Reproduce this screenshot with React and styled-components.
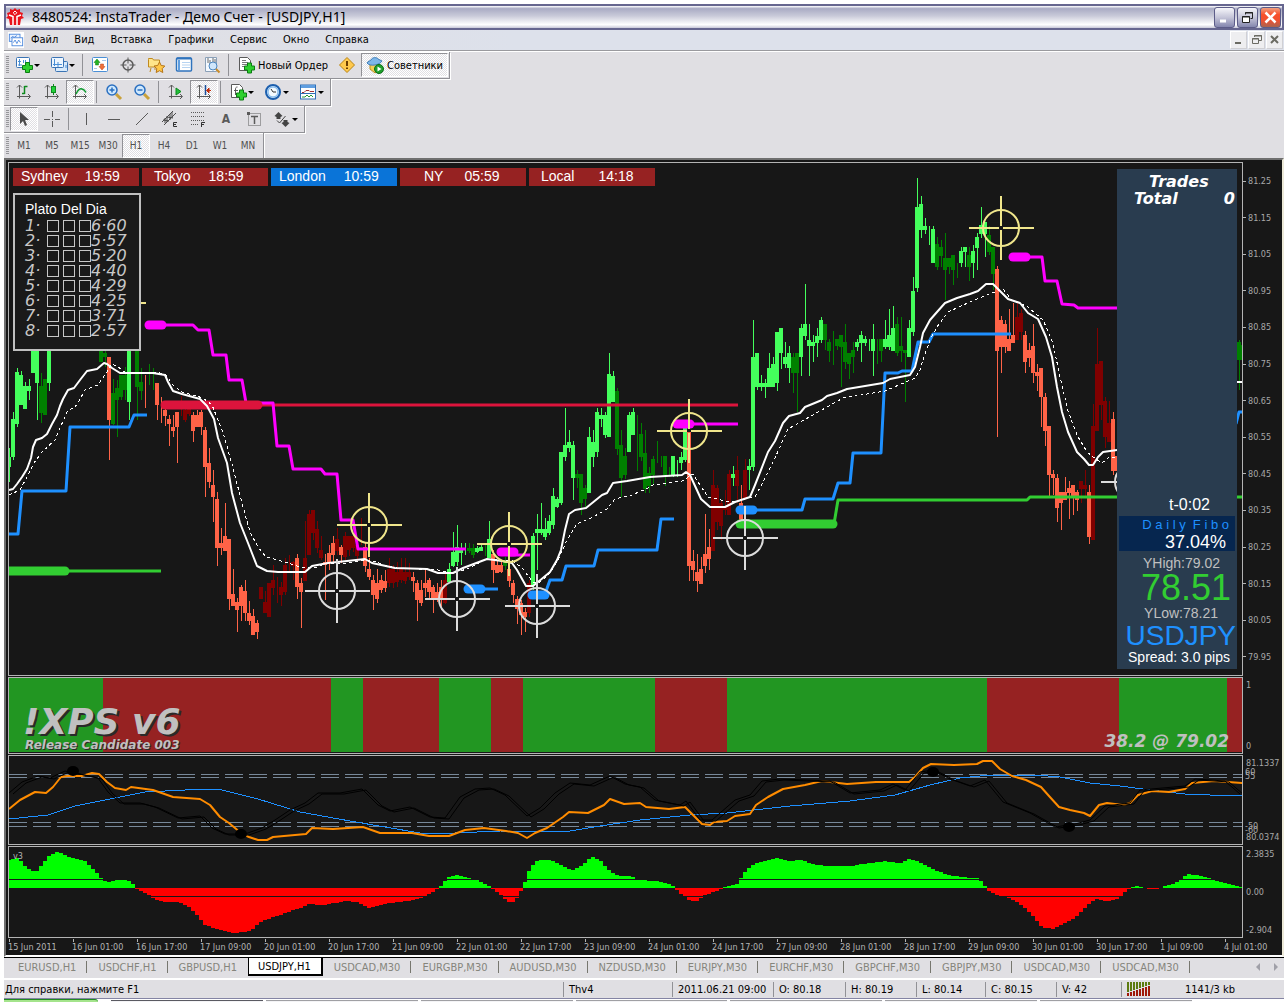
import React from 'react'
import styled, { createGlobalStyle, css } from 'styled-components'

const ui = '"DejaVu Sans Condensed", "DejaVu Sans", sans-serif'
const arial = '"Liberation Sans", Arial, sans-serif'

const GlobalStyle = createGlobalStyle`
* {
  box-sizing: border-box;
}

body {
  margin: 0;
  background: #fff;
  font-family: ${ui};
  font-size: 11px;
}
`

// ---------- chart data ----------

// x, high, low, body top, body bottom, kind
// U = strong up, u = weak up, D = strong down, d = weak down
const CANDLES = `
9 448 482 457 467 U;13 412 460 419 457 U;17 368 427 372 424 U;21 371 405 375 405 U;25 382 409 386 409 U;29 379 400 386 391 U;
33 340 373 340 373 U;37 340 420 340 383 U;41 373 423 386 413 u;45 379 415 379 415 u;49 340 391 340 383 U;
101 345 362 345 362 u;105 350 367 353 357 u;109 357 460 357 420 D;113 379 425 393 424 u;117 380 437 388 400 u;121 375 400 375 397 u;
125 367 400 375 390 u;129 340 420 340 402 U;137 340 420 350 387 u;141 368 400 382 391 u;145 375 408 0 0 D;149 364 385 0 0 u;
153 368 390 0 0 u;157 383 420 383 405 D;161 397 423 0 0 D;165 408 426 410 416 D;169 415 446 419 424 D;173 415 437 427 431 D;
177 412 463 412 427 D;181 396 416 0 0 d;185 405 422 410 420 d;189 405 416 409 414 d;193 412 442 415 431 D;197 410 427 415 427 D;
201 410 435 412 427 D;205 427 497 430 467 D;209 448 488 463 482 D;213 470 522 485 497 D;217 492 566 499 548 D;221 528 555 543 548 D;
225 503 551 536 551 D;229 539 610 539 599 D;233 569 606 594 606 D;237 598 632 602 610 D;241 585 621 587 606 D;245 580 621 591 613 D;
249 601 625 613 621 D;253 609 635 616 635 D;257 620 639 623 632 D;261 587 599 587 599 d;265 591 613 602 613 d;269 583 617 583 617 d;
273 565 595 580 588 d;277 577 603 0 0 d;281 582 606 587 595 d;285 558 595 565 592 d;289 555 573 0 0 d;293 561 580 562 566 d;
297 554 599 558 587 D;301 578 628 583 592 D;305 521 581 558 581 d;309 510 555 514 555 d;313 510 540 510 533 d;317 521 553 529 548 d;
321 536 560 550 558 d;325 554 600 562 565 D;329 545 570 553 563 D;333 536 562 543 555 D;337 528 555 539 551 d;341 545 563 547 555 D;
345 532 560 536 557 d;349 536 556 536 550 d;353 536 552 536 548 d;357 540 562 545 556 d;361 518 545 0 0 d;365 543 572 547 566 D;
369 558 580 569 577 D;373 575 610 580 595 D;377 569 603 583 599 D;381 575 593 580 590 D;385 570 592 581 588 D;389 558 587 569 583 d;
393 565 588 569 583 d;397 562 587 572 582 d;401 558 583 568 580 d;405 558 584 572 581 d;409 563 580 572 577 d;413 572 592 577 581 D;
417 580 621 583 600 D;421 580 606 590 603 D;425 570 597 583 588 D;429 578 598 580 592 D;433 585 613 587 599 D;437 583 602 592 599 D;
441 580 610 587 600 D;445 573 604 580 603 d;449 563 582 569 582 U;453 532 567 552 566 U;457 525 566 547 562 U;461 543 565 550 553 U;
465 543 555 0 0 U;469 543 553 548 551 u;473 544 558 548 555 u;477 546 553 548 552 U;481 543 551 547 551 U;485 545 556 0 0 u;
489 521 558 539 558 U;493 550 583 554 570 D;497 560 573 565 573 D;501 562 573 565 572 D;505 557 570 562 566 u;509 560 587 569 581 D;
513 580 603 583 595 D;517 596 624 599 609 D;521 600 635 603 615 D;525 608 632 612 617 D;529 580 617 583 613 d;533 533 590 536 585 U;
537 514 570 529 533 U;541 503 535 529 533 U;545 518 540 529 537 U;549 515 535 521 533 U;553 488 529 496 525 U;557 497 508 499 507 U;
561 452 505 452 503 U;565 408 461 445 457 U;569 430 452 442 448 U;573 441 500 445 478 U;577 470 488 474 478 u;581 474 515 474 503 u;
585 485 507 488 499 u;589 427 493 437 493 U;593 430 467 442 457 U;597 408 457 412 452 U;601 408 427 415 419 U;605 412 438 415 435 U;
609 353 437 374 437 U;613 371 402 376 402 U;617 388 455 391 449 u;621 430 497 445 478 u;625 448 479 456 475 u;629 412 452 415 452 U;
633 408 435 412 435 U;637 415 471 0 0 u;641 423 461 434 457 u;645 430 493 453 489 u;649 467 493 473 486 u;653 456 485 459 475 u;
657 441 463 0 0 u;661 456 467 0 0 u;665 456 486 456 475 u;669 467 477 0 0 u;673 456 477 456 475 U;677 460 477 0 0 U;
681 452 470 457 463 U;685 425 462 428 460 U;689 432 581 432 566 D;693 550 581 561 570 D;697 554 592 572 581 D;701 557 584 569 584 D;
705 514 573 554 566 D;709 529 570 547 559 D;713 470 551 485 551 d;717 485 530 488 522 d;721 500 540 503 526 d;725 490 515 506 510 d;
729 470 515 474 515 d;733 466 486 474 478 U;737 456 503 470 486 d;741 485 522 503 522 D;745 459 500 470 498 d;749 459 490 466 470 U;
753 320 471 357 467 U;757 353 390 353 387 U;761 375 391 383 387 U;765 379 398 383 387 U;769 353 387 368 387 U;773 357 387 364 387 U;
777 332 391 332 383 U;781 328 369 328 353 U;785 342 368 357 364 U;789 346 383 353 368 U;793 353 393 357 373 u;797 353 412 353 373 u;
801 324 376 328 357 U;805 284 340 324 336 U;809 324 376 340 346 U;813 335 362 342 346 U;817 328 357 336 343 U;821 317 343 320 340 U;
825 324 350 324 340 u;829 339 362 342 351 u;833 331 365 0 0 u;837 339 350 339 346 u;841 335 387 335 347 u;845 324 369 342 362 u;
849 353 379 353 364 u;853 342 373 350 357 u;857 339 351 342 347 U;861 331 362 335 343 U;865 336 346 339 343 U;869 339 351 0 0 U;
873 324 376 339 351 U;877 339 364 0 0 u;881 339 362 339 351 u;885 320 349 339 347 U;889 309 350 335 347 U;893 306 351 328 351 U;
897 317 356 324 353 u;901 317 362 346 351 u;905 350 402 350 353 u;909 320 357 328 357 U;913 277 336 291 332 U;917 178 292 207 288 U;
921 196 238 204 230 U;925 218 234 226 230 U;929 226 245 0 0 U;933 226 263 229 263 U;937 237 270 244 267 u;941 240 267 247 256 u;
945 233 300 258 270 u;949 258 274 258 267 u;953 255 285 255 270 u;957 263 278 0 0 u;961 247 267 251 263 U;965 247 267 247 252 U;
969 247 281 255 267 u;973 245 278 251 263 U;977 233 270 237 248 U;981 207 238 225 234 U;985 222 257 222 234 U;989 226 255 235 252 u;
993 247 290 247 274 u;997 266 437 269 351 D;1001 316 373 320 347 D;1005 320 353 324 347 D;1009 309 351 339 351 D;1013 303 343 335 343 D;
1017 303 340 317 340 d;1021 309 340 313 332 d;1025 331 373 335 362 D;1029 343 367 350 358 D;1033 324 383 346 373 D;1037 364 391 372 376 D;
1041 368 427 368 397 D;1045 393 446 397 431 D;1049 426 498 426 475 D;1053 470 495 474 478 D;1057 474 522 478 508 D;1061 492 530 492 503 D;
1065 477 500 492 500 D;1069 481 519 488 493 D;1073 485 515 485 496 D;1077 490 511 492 500 D;1081 481 503 481 489 d;1085 470 497 485 489 d;
1093 404 540 426 540 d;1089 485 544 492 537 D;1097 328 431 364 431 d;1101 361 420 361 405 d;1105 397 448 401 437 d;1109 401 442 423 442 d;
1113 412 475 419 471 D;1117 441 471 456 471 D;1239 340 390 342 360 u;1242 339 369 345 360 u`
  .split(';')
  .map(row => {
    const [x, high, low, top, bottom, kind] = row.trim().split(' ')
    return { x: +x, high: +high, low: +low, top: +top, bottom: +bottom, kind }
  })

const CANDLE_COLORS = { U: '#44ff5c', u: '#008000', D: '#ff6347', d: '#800000' }

const FAST_MA = '9,490 13,489 17,484 22,477 27,469 31,458 33,447 36,440 42,438 47,434 52,424 57,415 60,406 63,399 68,390 74,388 80,380 87,371 97,369 104,363 107,364 112,368 120,373 153,373 165,375 168,382 173,391 182,394 200,399 207,406 214,419 218,438 227,463 232,493 240,523 248,543 257,566 267,571 278,572 305,572 312,566 328,563 347,561 365,559 372,563 395,568 427,569 438,573 453,573 463,568 487,559 502,561 512,563 517,570 526,586 533,586 538,582 550,572 557,560 561,550 565,530 569,514 575,510 586,508 602,495 607,493 613,483 627,481 650,477 682,475 686,472 690,475 701,499 710,507 725,507 735,502 750,497 755,485 768,452 775,441 783,423 789,416 800,413 805,407 822,400 827,396 837,393 847,389 883,383 890,379 910,375 915,367 920,347 923,333 930,320 937,312 945,303 957,298 970,294 978,291 986,284 993,284 1002,293 1008,299 1020,303 1028,313 1038,319 1046,337 1052,357 1057,387 1062,412 1068,432 1077,452 1084,459 1089,465 1093,465 1098,457 1103,452 1117,450'
const SLOW_MA = '9,495 20,490 28,475 34,463 42,452 55,440 60,428 67,412 77,405 85,390 98,385 107,372 112,364 118,367 125,372 160,373 166,375 173,385 182,392 203,398 212,405 218,420 223,432 233,468 242,503 250,532 258,547 266,557 285,562 300,567 315,568 328,563 347,563 363,560 373,561 387,566 397,568 438,570 453,573 467,569 487,559 513,561 522,568 533,582 540,582 550,573 558,560 567,540 577,524 593,517 607,509 615,499 632,495 648,488 653,485 682,481 693,474 700,485 708,497 730,502 755,497 763,482 775,458 788,429 813,415 843,398 885,391 915,378 920,370 923,360 930,340 937,327 948,312 970,302 982,297 992,293 1003,289 1012,300 1028,307 1043,320 1053,343 1060,377 1068,411 1077,435 1087,452 1093,457 1102,463 1108,458 1117,457'

const LEVELS = [
  { color: '#32cd32', points: '9,571 161,571' },
  { color: '#32cd32', points: '834,524 838,500 1027,500 1030,497 1243,497' },
  { color: '#dc143c', points: '165,405 738,405' },
  { color: '#1e90ff', points: '9,534 18,534 22,491 66,491 70,427 129,427 134,415 147,415' },
  { color: '#1e90ff', points: '475,589 498,589' },
  { color: '#1e90ff', points: '545,594 550,580 562,580 566,566 594,566 598,550 657,550 661,519 674,519' },
  { color: '#1e90ff', points: '750,510 802,510 805,499 833,499 838,483 850,483 853,453 881,453 885,373 898,373 902,371 912,371 918,342 929,342 933,334 1011,334' },
  { color: '#1e90ff', points: '1236,424 1239,412 1243,412' },
  { color: '#ff00ff', points: '160,325 193,325 198,330 209,330 213,355 226,355 229,380 242,380 246,403 273,403 277,446 289,446 293,469 321,469 325,474 337,474 341,520 353,520 358,549 466,549' },
  { color: '#ff00ff', points: '510,555 530,555' },
  { color: '#ff00ff', points: '690,424 738,424' },
  { color: '#ff00ff', points: '1025,257 1042,257 1045,281 1057,281 1062,304 1074,305 1078,308 1118,308' },
]

// thick starts of the levels: x1, x2, y, color
const PILLS = [
  [0, 65, 571, '#32cd32'],
  [740, 833, 524, '#32cd32'],
  [165, 258, 405, '#dc143c'],
  [468, 481, 589, '#1e90ff'],
  [532, 545, 595, '#1e90ff'],
  [740, 753, 510, '#1e90ff'],
  [149, 162, 325, '#ff00ff'],
  [501, 514, 552, '#ff00ff'],
  [677, 690, 424, '#ff00ff'],
  [1013, 1026, 257, '#ff00ff'],
]

const TARGETS = [
  [369, 525, '#f0e68c'],
  [509, 544, '#f0e68c'],
  [689, 431, '#f0e68c'],
  [1001, 228, '#f0e68c'],
  [113, 303, '#f0e68c'],
  [337, 591, '#dcdcdc'],
  [457, 599, '#dcdcdc'],
  [537, 606, '#dcdcdc'],
  [745, 538, '#dcdcdc'],
  [1133, 482, '#dcdcdc'],
]

const BANDS = [9, 103, 331, 363, 439, 491, 523, 655, 727, 987, 1119, 1227, 1243]

const OSC_MAIN = '9,809 20,800 35,792 46,793 53,787 61,777 67,776 82,776 92,773 99,774 107,782 115,788 126,790 131,787 153,790 173,797 200,799 210,805 220,817 229,823 241,833 249,837 258,840 267,840 273,837 306,834 312,828 333,829 363,827 380,833 412,833 429,836 449,836 465,830 484,828 506,831 518,833 527,838 535,833 547,828 563,817 569,812 588,813 604,805 610,799 624,804 640,803 646,807 669,809 685,807 690,812 702,824 710,825 714,822 727,821 735,816 750,814 756,805 768,797 783,789 805,785 822,781 847,784 876,782 909,782 915,777 923,768 931,764 954,765 977,764 983,761 992,761 1000,769 1012,776 1026,780 1041,787 1049,796 1059,807 1070,810 1084,813 1090,816 1099,805 1107,803 1123,805 1130,803 1138,795 1152,791 1169,792 1185,789 1192,783 1214,781 1243,783'
const OSC_SIGNAL = '9,819 48,815 75,806 105,800 145,792 205,789 222,790 258,799 300,812 350,821 420,833 455,833 500,831 540,832 570,831 600,826 640,820 690,815 727,813 790,806 850,801 895,795 930,785 960,778 990,775 1036,775 1060,777 1090,783 1120,786 1150,790 1185,794 1210,795 1243,795'
const OSC_SHADOW = '9,793 22,782 38,776 50,778 65,771 80,774 98,778 108,792 120,803 140,803 155,807 178,818 200,816 212,828 225,834 245,834 262,828 275,820 290,810 305,803 318,793 340,793 362,789 378,805 390,811 410,807 430,817 445,818 460,797 475,789 490,788 505,795 527,816 540,808 555,793 570,783 590,785 610,776 625,784 640,787 655,800 680,805 686,801 700,820 712,820 735,800 750,795 762,781 780,779 830,781 850,793 880,790 893,784 905,790 920,772 933,770 950,779 970,786 985,780 1003,802 1030,813 1055,827 1075,824 1090,820 1105,806 1130,803 1140,790 1185,786 1195,779 1225,781 1240,794'

const HISTOGRAM = [
  [9, 860], [18, 858], [26, 867], [32, 871], [38, 871], [43, 863], [50, 855], [58, 852], [65, 855], [75, 859], [85, 861], [95, 871],
  [101, 878], [107, 882], [115, 880], [128, 880], [133, 884], [136, 888], [145, 893], [155, 899], [165, 902], [180, 902], [190, 907],
  [200, 919], [205, 925], [220, 930], [235, 933], [250, 931], [262, 921], [280, 915], [300, 908], [308, 904], [325, 905], [345, 901],
  [358, 902], [370, 908], [385, 904], [415, 900], [430, 894], [439, 888], [448, 877], [455, 875], [475, 879], [488, 885], [491, 888],
  [500, 894], [508, 902], [515, 902], [520, 893], [523, 888], [530, 868], [538, 860], [550, 860], [560, 864], [572, 870], [582, 866],
  [592, 856], [600, 860], [610, 871], [620, 876], [632, 876], [640, 880], [655, 881], [668, 884], [675, 887], [677, 890], [688, 900],
  [695, 902], [705, 895], [722, 889], [725, 887], [737, 884], [745, 872], [752, 865], [765, 861], [777, 858], [790, 861], [803, 860],
  [812, 864], [825, 866], [850, 866], [870, 863], [885, 861], [900, 863], [910, 859], [920, 862], [930, 868], [945, 874], [960, 877],
  [978, 878], [984, 884], [988, 890], [1000, 896], [1012, 899], [1025, 908], [1035, 918], [1042, 927], [1052, 929], [1062, 925],
  [1075, 918], [1085, 908], [1095, 899], [1108, 901], [1120, 898], [1127, 890], [1131, 888], [1137, 886], [1142, 887], [1150, 889],
  [1160, 889], [1163, 887], [1175, 883], [1188, 874], [1196, 875], [1215, 880], [1230, 884], [1243, 887],
]

const histogramAt = x => {
  const i = HISTOGRAM.findIndex(p => p[0] >= x)
  if (i <= 0) return HISTOGRAM[0][1]
  const [x0, y0] = HISTOGRAM[i - 1]
  const [x1, y1] = HISTOGRAM[i]
  return Math.round(y0 + ((y1 - y0) * (x - x0)) / (x1 - x0))
}

const PRICES = ['81.25', '81.15', '81.05', '80.95', '80.85', '80.75', '80.65', '80.55', '80.45', '80.35', '80.25', '80.15', '80.05', '79.95']

const TIMES = [
  '15 Jun 2011', '16 Jun 01:00', '16 Jun 17:00', '17 Jun 09:00', '20 Jun 01:00', '20 Jun 17:00', '21 Jun 09:00',
  '22 Jun 01:00', '22 Jun 17:00', '23 Jun 09:00', '24 Jun 01:00', '24 Jun 17:00', '27 Jun 09:00', '28 Jun 01:00',
  '28 Jun 17:00', '29 Jun 09:00', '30 Jun 01:00', '30 Jun 17:00', '1 Jul 09:00', '4 Jul 01:00',
]

const CLOCKS = [
  { city: 'Sydney', time: '19:59', pad: 8, gap: 17 },
  { city: 'Tokyo', time: '18:59', pad: 12, gap: 18 },
  { city: 'London', time: '10:59', pad: 8, gap: 18, open: true },
  { city: 'NY', time: '05:59', pad: 24, gap: 21 },
  { city: 'Local', time: '14:18', pad: 12, gap: 24 },
]

const PLATO = ['6·60', '5·57', '5·20', '4·40', '4·29', '4·25', '3·71', '2·57']

const MENU = ['Файл', 'Вид', 'Вставка', 'Графики', 'Сервис', 'Окно', 'Справка']

const PERIODS = ['M1', 'M5', 'M15', 'M30', 'H1', 'H4', 'D1', 'W1', 'MN']

const TABS = [
  'EURUSD,H1', 'USDCHF,H1', 'GBPUSD,H1', 'USDJPY,H1', 'USDCAD,M30', 'EURGBP,M30', 'AUDUSD,M30',
  'NZDUSD,M30', 'EURJPY,M30', 'EURCHF,M30', 'GBPCHF,M30', 'GBPJPY,M30', 'USDCAD,M30', 'USDCAD,M30',
]

// ---------- icons ----------

const plus = (x, y) => (
  <path d={`M${x + 3} ${y}h4v3h3v4h-3v3h-4v-3h-3v-4h3z`} fill="#2fd02f" stroke="#0b7d12" />
)

const axes = (
  <path d="M4.500 2v13.500M2 4.500l2.500-2.500 2.500 2.500M2 13.500h13M13 11l2.500 2.500-2.500 2.500" fill="none" stroke="#5a5a5a" />
)

const ICONS = {
  newChart: (
    <>
      <rect x="1.500" y="1.500" width="13" height="10" rx="1" fill="#fff" stroke="#3b74b5" />
      <path d="M4.500 3v7M3 5.500h3M8.500 4v3M10.500 4v3M3 9h4" stroke="#4a8fd6" />
      {plus(7.5, 6.5)}
    </>
  ),
  profiles: (
    <>
      <rect x="5.500" y="5.500" width="12" height="10" rx="1" fill="#d8eafb" stroke="#3b74b5" />
      <rect x="1.500" y="1.500" width="12" height="10" rx="1" fill="#eef6fe" stroke="#3b74b5" />
      <path d="M4.500 3v7M3 8.500h9M8 6v5M16 9v3" stroke="#4a8fd6" />
    </>
  ),
  market: (
    <>
      <rect x="1.500" y="1.500" width="15" height="14" rx="1" fill="#fff" stroke="#4a8fd6" />
      <path d="M6 3l3 3.500H7.500V9h-3V6.500H3z" fill="#24b324" stroke="#0f7d0f" strokeWidth=".5" />
      <path d="M11 14l-3-3.500h1.500V8h3v2.500H14z" fill="#f07038" stroke="#b8401a" strokeWidth=".5" />
      <path d="M11 4.500h4M3 12.500h3" stroke="#a8c8ea" />
    </>
  ),
  target: (
    <>
      <circle cx="9" cy="9" r="5" fill="none" stroke="#5a5a5a" strokeWidth="1.500" />
      <path d="M9 1.500v6M9 10.500v6M1.500 9h6M10.500 9h6" stroke="#5a5a5a" />
    </>
  ),
  navigator: (
    <>
      <path d="M1.500 3.500V2.500h4l1 1.500h6v7h-11z" fill="#ffe58a" stroke="#c08a20" />
      <path d="M4 12l-1 4M8 12v2" stroke="#c08a20" />
      <path d="M12.500 6l1.700 3.500 3.600.5-2.600 2.700.6 3.800-3.300-1.800-3.300 1.800.6-3.800L7 10l3.700-.5z" fill="#ffc84a" stroke="#b57416" />
    </>
  ),
  terminal: (
    <>
      <rect x="1.500" y="2" width="15" height="13" rx="1" fill="#fff" stroke="#2f73bd" strokeWidth="1.500" />
      <path d="M2 2.500h14" stroke="#2f73bd" strokeWidth="2" />
      <path d="M4 4v10" stroke="#5f9ee0" strokeWidth="2" />
      <path d="M7 6.500h8M7 9h8M7 11.500h8" stroke="#b6d3f1" />
    </>
  ),
  tester: (
    <>
      <path d="M2.500 1.500h11v14h-11z" fill="#f4f9ff" stroke="#8aa0b8" />
      <path d="M5 2v5M7 4v5M10 2v4M12 3v4" stroke="#6a6a6a" />
      <circle cx="10" cy="10" r="4" fill="#cfe6fb" stroke="#4a86c0" />
      <path d="M13 13l3.500 3.500" stroke="#c98c2a" strokeWidth="2" />
    </>
  ),
  order: (
    <>
      <path d="M2.500 1.500h8l3 3v10h-11z" fill="#fff" stroke="#5a5a5a" />
      <path d="M5 4.500h4M5 6.500h6M5 8.500h5M5 10.500h3" stroke="#7a7a7a" />
      {plus(7.5, 7)}
    </>
  ),
  alert: (
    <>
      <path d="M9 1.500L16.500 9 9 16.500 1.500 9z" fill="#ffc94d" stroke="#b98413" />
      <path d="M9 5v5M9 11.500v1.500" stroke="#6b3c00" strokeWidth="2" />
    </>
  ),
  experts: (
    <>
      <path d="M4 8l8-1 1 5-4 5-5-4z" fill="#f5cf55" stroke="#b98d20" />
      <path d="M1 7c1-2 3-2 4-3 1-3 6-3 7-1 1 1 3 1 4 2-2 4-12 6-15 2z" fill="#7db6e8" stroke="#3f7eb8" />
      <circle cx="13" cy="13" r="4.500" fill="#1fa02c" stroke="#0b6d15" />
      <path d="M11.500 10.500l4 2.500-4 2.500z" fill="#fff" />
    </>
  ),
  bars: (
    <>
      {axes}
      <path d="M9.500 3v8M9.500 3.500h3M7 10.500h2.500" stroke="#0f8a1f" strokeWidth="1.500" fill="none" />
    </>
  ),
  candles: (
    <>
      {axes}
      <path d="M10.500 1v11" stroke="#0f8a1f" />
      <rect x="8.500" y="3.500" width="4" height="6" fill="#22d13a" stroke="#0f8a1f" />
    </>
  ),
  line: (
    <>
      {axes}
      <path d="M5 11c2-4 4-6 6-5 2 0 3 2 4 3.500" fill="none" stroke="#0f9a2f" strokeWidth="1.500" />
    </>
  ),
  zoomIn: (
    <>
      <path d="M11 11l5 5" stroke="#c9a13a" strokeWidth="3" />
      <circle cx="7" cy="7" r="5" fill="#cfe8fd" stroke="#2a6fc0" strokeWidth="1.500" />
      <path d="M7 4.500v5M4.500 7h5" stroke="#2a6fc0" strokeWidth="1.500" />
    </>
  ),
  zoomOut: (
    <>
      <path d="M11 11l5 5" stroke="#c9a13a" strokeWidth="3" />
      <circle cx="7" cy="7" r="5" fill="#cfe8fd" stroke="#2a6fc0" strokeWidth="1.500" />
      <path d="M4.500 7h5" stroke="#2a6fc0" strokeWidth="1.500" />
    </>
  ),
  scroll: (
    <>
      {axes}
      <path d="M9 5l5 3.500-5 3.500z" fill="#22c13a" stroke="#0f8a1f" />
    </>
  ),
  shift: (
    <>
      {axes}
      <path d="M10.500 2v10" stroke="#1a4f9a" strokeWidth="1.500" />
      <path d="M16 7.500h-4M14 5l-2.500 2.500L14 10z" stroke="#c03010" fill="#c03010" />
    </>
  ),
  indicators: (
    <>
      <path d="M2.500 1.500h8l3 3v10h-11z" fill="#fff" stroke="#5a5a5a" />
      <path d="M8.500 4c-2 0-2 1-2 3v5M5 7.500h4" stroke="#5a5a5a" fill="none" />
      {plus(7.5, 7)}
    </>
  ),
  clock: (
    <>
      <circle cx="9" cy="9" r="7" fill="#d6ebfd" stroke="#1d5fae" strokeWidth="2" />
      <circle cx="9" cy="9" r="5" fill="#f4faff" stroke="#6fb0ea" />
      <path d="M7 6l2 3h3" fill="none" stroke="#333" />
    </>
  ),
  template: (
    <>
      <rect x="1.500" y="2" width="15" height="14" fill="#fff" stroke="#2f6fb5" />
      <path d="M2 3.500h14" stroke="#5f9ee0" strokeWidth="3" />
      <path d="M3 9.500h2l2-2h3l1 1h4" stroke="#a03030" fill="none" />
      <path d="M3 14h3l2-2 2 2 2-2 2 2" stroke="#249a34" fill="none" />
      <path d="M2 10.500h14" stroke="#2f6fb5" />
    </>
  ),
  cursor: <path d="M5 2v12l3-3 2 5 2-1-2-5h4z" fill="#4a4a4a" />,
  cross: <path d="M9.500 1v6M9.500 11v6M1 9.500h6M12 9.500h5M9 9.500h1" stroke="#5a5a5a" />,
  vline: <path d="M9.500 3v12" stroke="#5a5a5a" />,
  hline: <path d="M3 9.500h12" stroke="#5a5a5a" />,
  trend: <path d="M3 15L15 3" stroke="#5a5a5a" />,
  channel: (
    <>
      <path d="M1 12L12 1M3 15L15 3M4 8v5M6 6v6M9 4v6M11 2v6M2 10l6 1M6 7l6 1" stroke="#4a4a4a" />
      <path d="M16 12.500h-3.500v4H16M12.500 14.500H15" stroke="#333" fill="none" />
    </>
  ),
  fibo: (
    <>
      <path d="M2 2.500h14M2 6.500h14M2 10.500h14M2 14.500h8" stroke="#5a5a5a" strokeDasharray="1 1" />
      <path d="M16 12.500h-3.500V17M12.500 14.500H15" stroke="#333" fill="none" />
    </>
  ),
  label: (
    <>
      <rect x="3.500" y="3.500" width="12" height="12" fill="none" stroke="#5a5a5a" strokeDasharray="1 1" />
      <path d="M6 6.500h7M9.500 6.500V14" stroke="#5a5a5a" strokeWidth="1.500" />
      <path d="M2 2h3v3H2z" fill="#5a5a5a" />
    </>
  ),
  arrows: (
    <>
      <path d="M1.500 6L5.500 2l4 4-2 1v2h-4V7zM10.500 10v2l-2 1 4 4 4-4-2-1v-2z" fill="#444" />
      <path d="M4 10.500l2.500 2.500 6-7" fill="none" stroke="#444" />
    </>
  ),
  doc: (
    <>
      <rect x="0" y="0" width="18" height="18" fill="#fff" />
      <rect x="1.500" y="2.500" width="12" height="8" fill="#eaf3ff" stroke="#4a86dc" />
      <rect x="4.500" y="6.500" width="12" height="9" fill="#fff" stroke="#4a86dc" />
      <path d="M6 12l2-3 2 4 2-4 2 3M3 7l2-2 2 1 3-2" stroke="#4a86dc" fill="none" />
    </>
  ),
  logo: (
    <>
      <path d="M9 0l2 2 3-1 0 3 3 1-1 3 2 2-3 1-1 6H4l-1-6-3-1 2-2-1-3 3-1V1l3 1z" fill="#e8141c" />
      <path d="M3 7l4 1.500V17M15 7l-4 1.500V17" fill="none" stroke="#fff" strokeWidth="1.500" />
      <path d="M9 3l1.800 1.800L9 6.600 7.200 4.800z" fill="#e8141c" stroke="#fff" />
    </>
  ),
}

const Icon = ({ name, size = 18 }) => (
  <svg width={size} height={size} viewBox="0 0 18 18" aria-hidden="true">
    {ICONS[name]}
  </svg>
)

// ---------- parts ----------

const Tool = ({ icon, label, menu, pressed, children }) => (
  <ToolButton type="button" aria-label={label} aria-pressed={pressed} $menu={menu} $pressed={pressed} $wide={!!icon && !!children}>
    {icon && <Icon name={icon} />}
    {children}
    {menu && <Caret />}
  </ToolButton>
)

const Target = ({ x, y, color }) => (
  <g stroke={color} strokeWidth="2" fill="none">
    <circle cx={x} cy={y} r="18" />
    <path d={`M${x - 32} ${y}h30M${x + 2} ${y}h31M${x} ${y - 32}v30M${x} ${y + 2}v30`} shapeRendering="crispEdges" />
  </g>
)

const PriceChart = () => (
  <Drawing viewBox="9 163 1233 512" preserveAspectRatio="none">
    <g shapeRendering="crispEdges">
      {CANDLES.map(c => (
        <g key={c.x} fill={CANDLE_COLORS[c.kind]}>
          <rect x={c.x} y={c.high} width="1" height={c.low - c.high} />
          {c.bottom > 0 && <rect x={c.x - 2} y={c.top} width="4" height={c.bottom - c.top} />}
        </g>
      ))}
    </g>
    <g fill="none" strokeWidth="3" strokeLinejoin="round">
      {LEVELS.map(l => (
        <polyline key={l.points} points={l.points} stroke={l.color} />
      ))}
    </g>
    {PILLS.map(([x1, x2, y, color]) => (
      <path key={`${x1}-${y}`} d={`M${x1} ${y}H${x2}`} stroke={color} strokeWidth="9" strokeLinecap="round" />
    ))}
    <polyline points={SLOW_MA} fill="none" stroke="#fff" strokeDasharray="3 3" shapeRendering="crispEdges" />
    <polyline points={FAST_MA} fill="none" stroke="#fff" strokeWidth="2" strokeLinejoin="round" />
    <path d="M1236 382h8" stroke="#fff" strokeWidth="2" />
    {TARGETS.map(([x, y, color]) => (
      <Target key={`${x}-${y}`} x={x} y={y} color={color} />
    ))}
  </Drawing>
)

const BandChart = () => (
  <Drawing viewBox="9 678 1233 75" preserveAspectRatio="none" shapeRendering="crispEdges">
    {BANDS.slice(0, -1).map((x, i) => (
      <rect key={x} x={x} y="678" width={BANDS[i + 1] - x} height="74" fill={i % 2 ? '#962222' : '#229622'} />
    ))}
  </Drawing>
)

const Oscillator = () => (
  <Drawing viewBox="9 756 1233 88" preserveAspectRatio="none">
    <path
      d="M9 774.500h1234M9 777.500h1234M9 822.500h1234M9 826.500h1234"
      stroke="#778899"
      strokeDasharray="18 6"
      shapeRendering="crispEdges"
    />
    <g fill="none">
      <polyline points={OSC_SIGNAL} stroke="#1e90ff" shapeRendering="crispEdges" />
      <polyline points={OSC_MAIN} stroke="#ff8c00" strokeWidth="2" strokeLinejoin="round" />
      <polyline points={OSC_SHADOW} stroke="#000" />
      <polyline points={OSC_SHADOW} stroke="#000" transform="translate(4 1)" />
    </g>
    {[[73, 771], [241, 834], [933, 772], [1069, 827]].map(([x, y]) => (
      <ellipse key={x} cx={x} cy={y} rx="6" ry="5" fill="#000" />
    ))}
  </Drawing>
)

const Histogram = () => {
  const bars = []
  for (let x = 7; x < 1243; x += 4) {
    const y = histogramAt(x + 2)
    bars.push(
      <rect key={x} x={x} y={Math.min(y, 888)} width="4" height={Math.abs(888 - y)} fill={y < 888 ? '#00ff00' : '#ff0000'} />
    )
  }
  return (
    <Drawing viewBox="9 847 1233 90" preserveAspectRatio="none" shapeRendering="crispEdges">
      {bars}
      <path d="M9 879.500h1234M9 896.500h1234" stroke="#171717" />
    </Drawing>
  )
}

const App = () => (
  <>
    <GlobalStyle />
    <Window>
      <TitleBar>
        <Icon name="logo" />
        <Title>8480524: InstaTrader - Демо Счет - [USDJPY,H1]</Title>
        <CaptionButton type="button" aria-label="Minimize">
          <svg width="13" height="13"><path d="M2 10h6" stroke="#fff" strokeWidth="3" /></svg>
        </CaptionButton>
        <CaptionButton type="button" aria-label="Restore">
          <svg width="13" height="13" fill="none" stroke="#222"><path d="M4.500 3.500v-2h7v6h-2M4 2h8" /><path d="M1.500 5.500h7v6h-7zM1 6h8" fill="#fff" /></svg>
        </CaptionButton>
        <CaptionButton type="button" aria-label="Close" $close>
          <svg width="13" height="13"><path d="M1.500 1.500l10 10M11.500 1.500l-10 10" stroke="#fff" strokeWidth="2.500" /></svg>
        </CaptionButton>
      </TitleBar>

      <MenuBar>
        <Icon name="doc" size={16} />
        <Menus>
          {MENU.map(item => (
            <MenuItem key={item} type="button">{item}</MenuItem>
          ))}
        </Menus>
        <ChildButton type="button" aria-label="Minimize chart">
          <svg width="11" height="11"><path d="M2 9h6" stroke="#6b6b63" strokeWidth="2" /></svg>
        </ChildButton>
        <ChildButton type="button" aria-label="Restore chart">
          <svg width="11" height="11" fill="none" stroke="#6b6b63"><path d="M3.500 3V1.500h7v5H8M3 2h8M1.500 4.500h6v5h-6zM1 5h7" /></svg>
        </ChildButton>
        <ChildButton type="button" aria-label="Close chart">
          <svg width="11" height="11"><path d="M2 2l7 7M9 2l-7 7" stroke="#6b6b63" strokeWidth="2" /></svg>
        </ChildButton>
      </MenuBar>

      <Toolbars>
        <Toolbar>
          <Grip />
          <Tool icon="newChart" label="Новый график" menu />
          <Tool icon="profiles" label="Профили" menu />
          <Divider />
          <Tool icon="market" label="Обзор рынка" />
          <Tool icon="target" label="Окно данных" />
          <Tool icon="navigator" label="Навигатор" />
          <Tool icon="terminal" label="Терминал" />
          <Tool icon="tester" label="Тестер" />
          <Divider />
          <Tool icon="order">Новый Ордер</Tool>
          <Tool icon="alert" label="MetaEditor" />
          <Tool icon="experts" pressed>Советники</Tool>
        </Toolbar>
        <Toolbar>
          <Grip />
          <Tool icon="bars" label="Бары" />
          <Tool icon="candles" label="Свечи" />
          <Tool icon="line" label="Линия" pressed />
          <Divider />
          <Tool icon="zoomIn" label="Увеличить" />
          <Tool icon="zoomOut" label="Уменьшить" />
          <Divider />
          <Tool icon="scroll" label="Автопрокрутка" />
          <Tool icon="shift" label="Сдвиг графика" pressed />
          <Divider />
          <Tool icon="indicators" label="Индикаторы" menu />
          <Tool icon="clock" label="Периоды" menu />
          <Tool icon="template" label="Шаблоны" menu />
        </Toolbar>
        <Toolbar>
          <Grip />
          <Tool icon="cursor" label="Курсор" pressed />
          <Tool icon="cross" label="Перекрестие" />
          <Divider />
          <Tool icon="vline" label="Вертикальная линия" />
          <Tool icon="hline" label="Горизонтальная линия" />
          <Tool icon="trend" label="Трендовая линия" />
          <Tool icon="channel" label="Канал" />
          <Tool icon="fibo" label="Фибоначчи" />
          <Tool label="Текст"><Letter>A</Letter></Tool>
          <Tool icon="label" label="Метка" />
          <Tool icon="arrows" label="Стрелки" menu />
        </Toolbar>
        <Toolbar>
          <Grip />
          {PERIODS.map(p => (
            <Period key={p} type="button" $pressed={p === 'H1'}>{p}</Period>
          ))}
        </Toolbar>
      </Toolbars>

      <ChartWindow>
        <Panel $grow>
          <Plot>
            <PriceChart />
            <Clocks>
              {CLOCKS.map(c => (
                <Clock key={c.city} $open={c.open} $pad={c.pad} $gap={c.gap}>
                  <span>{c.city}</span>
                  <span>{c.time}</span>
                </Clock>
              ))}
            </Clocks>
            <Plato>
              <PlatoTitle>Plato Del Dia</PlatoTitle>
              {PLATO.map((value, i) => (
                <PlatoRow key={value}>
                  <span>{i + 1}·</span>
                  <Boxes><Box /><Box /><Box /></Boxes>
                  <span>{value}</span>
                </PlatoRow>
              ))}
            </Plato>
            <Side>
              <Trades>Trades</Trades>
              <Total><span>Total</span><span>0</span></Total>
              <Line $size={16} $height={20} $inset={27} $push>t-0:02</Line>
              <Fibo>
                <Line $size={13} $height={17} $inset={6} $color="#1e90ff">{'D a i l y  F i b o'}</Line>
                <Line $size={18} $height={18} $inset={9}>37.04%</Line>
              </Fibo>
              <Line $size={14} $height={18} $inset={17} $color="#c0c0c0">YHigh:79.02</Line>
              <Line $size={36} $height={32} $inset={6} $color="#32cd32">78.51</Line>
              <Line $size={14} $height={18} $inset={19} $color="#c0c0c0">YLow:78.21</Line>
              <Line $size={28} $height={27} $inset={1} $color="#1e90ff">USDJPY</Line>
              <Line $size={14} $height={16} $inset={7}>Spread: 3.0 pips</Line>
            </Side>
          </Plot>
          <Axis $pad="13px">
            {PRICES.map(p => <Mark key={p} $tick>{p}</Mark>)}
          </Axis>
        </Panel>

        <Panel $height={77}>
          <Plot>
            <BandChart />
            <Brand>
              <BrandName>!XPS v6</BrandName>
              <BrandNote>Release Candidate 003</BrandNote>
            </Brand>
            <BandNote>38.2 @ 79.02</BandNote>
          </Plot>
          <Axis $pad="2px">
            <Mark>1</Mark>
            <Mark>0</Mark>
          </Axis>
        </Panel>

        <Panel $height={90}>
          <Plot>
            <Oscillator />
          </Plot>
          <Axis $pad="2px">
            <MarkGroup>
              <Mark>81.1337</Mark>
              <Tight>60</Tight>
              <Tight>55</Tight>
            </MarkGroup>
            <MarkGroup>
              <Tight>-50</Tight>
              <Tight>-60</Tight>
              <Mark>80.0374</Mark>
            </MarkGroup>
          </Axis>
        </Panel>

        <Panel $height={92}>
          <Plot>
            <Histogram />
            <Version>v3</Version>
          </Plot>
          <Axis $pad="2px">
            <Mark>2.3835</Mark>
            <Mark>0.00</Mark>
            <Mark>-2.904</Mark>
          </Axis>
        </Panel>

        <Times>
          {TIMES.map(t => <Time key={t}>{t}</Time>)}
        </Times>
      </ChartWindow>

      <TabBar role="tablist">
        {TABS.map((t, i) => (
          <Tab key={i} type="button" role="tab" aria-selected={i === 3} $active={i === 3} $last={i === 2}>{t}</Tab>
        ))}
        <TabArrows>
          <svg width="24" height="9" fill="#a0a0a8"><path d="M5 0v8L1 4zM19 0v8l4-4z" /></svg>
        </TabArrows>
      </TabBar>

      <StatusBar>
        <Status>Для справки, нажмите F1</Status>
        <Status>Thv4</Status>
        <Status>2011.06.21 09:00</Status>
        <Status>O: 80.18</Status>
        <Status>H: 80.19</Status>
        <Status>L: 80.14</Status>
        <Status>C: 80.15</Status>
        <Status>V: 42</Status>
        <Status>
          <svg width="24" height="14" aria-hidden="true">
            {[0, 1, 2, 3, 4, 5, 6, 7].map(i => (
              <g key={i}>
                <rect x={i * 3} y="0" width="2" height={10 - i} fill="#5c7a10" />
                <rect x={i * 3} y={11 - i} width="2" height={3 + i} fill="#a01808" />
              </g>
            ))}
          </svg>
          <Traffic>1141/3 kb</Traffic>
        </Status>
      </StatusBar>

      <Taskbar>
        <StartEdge />
        <TaskEdge $dark />
        <TaskEdge />
        <TaskEdge />
        <TaskEdge />
        <TaskEdge />
        <TaskEdge />
        <TaskEdge />
      </Taskbar>
    </Window>
  </>
)

const Window = styled.div`
display: flex;
flex-direction: column;
height: 100vh;
min-height: 700px;
padding: 4px 4px 0;
overflow: hidden;
`

const TitleBar = styled.header`
display: flex;
align-items: center;
gap: 2px;
height: 26px;
padding: 0 1px 0 0;
border: 2px solid #66668f;
background: linear-gradient(#fff 0, #a9abc4 12%, #c9cad9 45%, #fff 85%, #c8c8d8 100%);
`

const Title = styled.h1`
flex: 1;
margin: 0;
padding-left: 6px;
font-family: "Noto Sans", sans-serif;
font-size: 14px;
font-weight: 400;
line-height: 20px;
color: #000;
`

const CaptionButton = styled.button`
display: grid;
place-items: center;
width: 21px;
height: 21px;
padding: 0;
border: 1px solid #5c5c88;
border-radius: 3px;
background: ${props => props.$close
    ? 'linear-gradient(#f0a080, #f8502c 35%, #f05030 65%, #a86450)'
    : 'linear-gradient(#f6f6fa, #c4c4d8 50%, #8486ae)'};
`

const MenuBar = styled.nav`
display: flex;
align-items: center;
gap: 1px;
height: 22px;
padding: 0 1px 2px 4px;
border-bottom: 1px solid #fff;
box-shadow: inset 0 -1px 0 #9a9a9e;
background: linear-gradient(90deg, #e0dfe3, #dde1eb 40%);
`

const Menus = styled.div`
display: flex;
flex: 1;
gap: 16px;
padding-left: 6px;
`

const MenuItem = styled.button`
padding: 0;
border: 0;
background: none;
font: 11px ${ui};
color: #000;
`

const ChildButton = styled.button`
display: grid;
place-items: center;
width: 17px;
height: 18px;
padding: 0;
border: 1px solid #fff;
border-right-color: #d0d0d4;
border-bottom-color: #d0d0d4;
background: #eeeef0;
`

const Toolbars = styled.div`
display: flex;
flex-direction: column;
align-items: flex-start;
background: #e0dfe3;
`

const Toolbar = styled.div`
display: flex;
align-items: center;
height: 27px;
padding-right: 1px;
border-right: 1px solid #919196;
border-bottom: 1px solid #919196;
box-shadow: 1px 1px 0 #fff, inset 0 1px 0 #fff;

&:last-child {
  height: 25px;
  border-bottom: 0;
}
`

const Grip = styled.span`
width: 3px;
height: 18px;
margin: 0 1px 0 2px;
background: repeating-linear-gradient(#96969a 0 1px, transparent 1px 2px);
`

const Divider = styled.span`
width: 1px;
height: 22px;
margin: 0 3px 0 2px;
background: #919196;
`

const pressedLook = css`
border-color: #919196 #fff #fff #919196;
background: repeating-conic-gradient(#fff 0 25%, #e0dfe3 0 50%) 0 0 / 2px 2px;
`

const ToolButton = styled.button`
display: flex;
align-items: center;
justify-content: center;
gap: ${props => (props.$menu ? '1px' : '3px')};
width: ${props => (props.$wide ? 'auto' : props.$menu ? '35px' : '28px')};
min-width: 28px;
height: 24px;
padding: ${props => (props.$wide ? '0 4px' : 0)};
border: 1px solid transparent;
background: none;
font: 11px ${ui};
color: #000;
${props => props.$pressed && pressedLook}
`

const Caret = styled.span`
border: 3px solid transparent;
border-top-color: #000;
border-bottom: 0;
`

const Letter = styled.span`
font: bold 12px "DejaVu Sans Condensed", sans-serif;
color: #5a5a5a;
`

const Period = styled.button`
width: 28px;
height: 24px;
padding: 0;
border: 1px solid transparent;
background: none;
font: 10px ${ui};
color: #505050;
${props => props.$pressed && pressedLook}
`

const ChartWindow = styled.main`
display: flex;
flex: 1;
flex-direction: column;
gap: 1px;
min-height: 0;
padding: 2px 0 0 2px;
border: 2px solid #6f6f6f;
border-right-color: #ece9d8;
border-bottom-color: #fff;
background: #171717;
`

const Panel = styled.section`
display: grid;
grid-template-columns: minmax(0, 1fr) 39px;
${props => (props.$grow ? 'flex: 1; min-height: 0;' : `height: ${props.$height}px;`)}
`

const Plot = styled.div`
position: relative;
min-height: 0;
border: 1px solid #b4b4b4;
`

const Drawing = styled.svg`
position: absolute;
inset: 0;
display: block;
width: 100%;
height: 100%;
`

const Axis = styled.div`
display: flex;
flex-direction: column;
justify-content: space-between;
min-height: 0;
padding: ${props => props.$pad} 0;
font-size: 9px;
color: #a8a8a8;
`

const Mark = styled.span`
display: flex;
align-items: center;
gap: 2px;
height: 12px;
padding-left: ${props => (props.$tick ? 0 : '3px')};

${props => props.$tick && css`
&::before {
  content: '';
  width: 3px;
  height: 1px;
  background: #b4b4b4;
}
`}
`

const MarkGroup = styled.div`
display: flex;
flex-direction: column;
`

const Tight = styled.span`
height: 4px;
padding-left: 2px;
line-height: 6px;
`

const Clocks = styled.div`
position: absolute;
top: 5px;
left: 4px;
display: flex;
gap: 3px;
font: 14px/18px ${arial};
color: #fff;
`

const Clock = styled.div`
display: flex;
gap: ${props => props.$gap}px;
width: 126px;
height: 18px;
padding-left: ${props => props.$pad}px;
line-height: 17px;
background: ${props => (props.$open ? '#0a74d8' : '#962222')};
`

const Plato = styled.div`
position: absolute;
top: 30px;
left: 4px;
width: 128px;
height: 158px;
padding: 6px 0 0 10px;
border: 2px solid #c0c0c0;
background: #1a1a1a;
`

const PlatoTitle = styled.div`
font: 14px/17px ${arial};
color: #fff;
`

const PlatoRow = styled.div`
display: grid;
grid-template-columns: 22px 44px 1fr;
align-items: center;
height: 15px;
font: italic 200 16px/15px "DejaVu Sans", sans-serif;
color: #c8c8c8;
`

const Boxes = styled.span`
display: flex;
gap: 4px;
`

const Box = styled.span`
width: 12px;
height: 12px;
border: 1px solid #c8c8c8;
`

const Side = styled.aside`
position: absolute;
top: 6px;
right: 5px;
bottom: 6px;
display: flex;
flex-direction: column;
width: 120px;
padding: 4px 0;
background: #293c4f;
font-family: ${arial};
`

const Trades = styled.div`
padding-left: 32px;
font: italic bold 16px/17px "DejaVu Sans", sans-serif;
color: #fff;
`

const Total = styled(Trades)`
display: flex;
justify-content: space-between;
padding: 0 2px 0 17px;
`

const Line = styled.div`
margin-top: ${props => (props.$push ? 'auto' : 0)};
padding-right: ${props => props.$inset}px;
font-size: ${props => props.$size}px;
line-height: ${props => props.$height}px;
text-align: right;
white-space: pre;
color: ${props => props.$color || '#fff'};
`

const Fibo = styled.div`
margin: 1px 2px 3px;
background: #06264f;
`

const Brand = styled.div`
position: absolute;
left: 14px;
bottom: 1px;
font-family: "DejaVu Sans", sans-serif;
font-style: italic;
font-weight: bold;
color: #c0c0c0;
`

const BrandName = styled.div`
font-size: 36px;
line-height: 32px;
text-shadow: 2px 2px 0 #2a2a2a;
`

const BrandNote = styled.div`
padding-left: 2px;
font-size: 12px;
line-height: 14px;
text-shadow: 1px 1px 0 #2a2a2a;
`

const BandNote = styled.div`
position: absolute;
right: 13px;
bottom: 2px;
font: italic bold 17px/20px "DejaVu Sans", sans-serif;
color: #c0c0c0;
`

const Version = styled.span`
position: absolute;
top: 4px;
left: 4px;
font-size: 9px;
color: #b4b4b4;
`

const Times = styled.div`
display: grid;
grid-template-columns: repeat(19, minmax(0, 1fr)) 58px;
height: 16px;
font-size: 9px;
line-height: 11px;
white-space: nowrap;
color: #b4b4b4;
`

const Time = styled.span`
&::before {
  content: '';
  display: block;
  width: 1px;
  height: 3px;
  margin-left: 1px;
  background: #b4b4b4;
}
`

const TabBar = styled.div`
display: flex;
align-items: flex-start;
height: 21px;
padding-left: 3px;
border-top: 1px solid #000;
background: #e0dfe3;
`

const Tab = styled.button`
position: relative;
height: 18px;
padding: 0 11px;
border: 0;
background: none;
font: 11px ${ui};
color: #85857c;

${props => props.$active ? css`
padding: 0 10px 0 9px;
border: solid #000;
border-width: 0 2px 2px 1px;
background: #fff;
color: #000;
` : !props.$last && css`
&::after {
  content: '';
  position: absolute;
  top: 3px;
  right: 0;
  width: 1px;
  height: 12px;
  background: #77776f;
}
`}
`

const TabArrows = styled.span`
margin: 4px 5px 0 auto;
`

const StatusBar = styled.footer`
display: grid;
grid-template-columns: minmax(0, 1fr) 109px 101px 72px 71px 69px 71px 65px 163px;
align-items: center;
height: 21px;
border-top: 2px solid #fff;
border-bottom: 1px solid #8484a4;
background: #e0dfe3;
`

const Status = styled.div`
display: flex;
align-items: center;
height: 15px;
padding-left: 5px;
border-left: 1px solid #919196;
white-space: nowrap;

&:first-child {
  padding-left: 1px;
  border-left: 0;
}
`

const Traffic = styled.span`
padding-left: 34px;
`

const Taskbar = styled.div`
display: flex;
gap: 3px;
height: 3px;
padding-right: 92px;
`

const StartEdge = styled.span`
width: 94px;
margin-right: 10px;
border-top: 1px solid #1f8a1f;
border-radius: 0 3px 0 0;
background: #a4e48c;
`

const TaskEdge = styled.span`
flex: 1;
margin-top: 1px;
border-top: 1px solid ${props => (props.$dark ? '#5a5a62' : '#a0a0a4')};
background: #f4f4f6;
`

export default App
